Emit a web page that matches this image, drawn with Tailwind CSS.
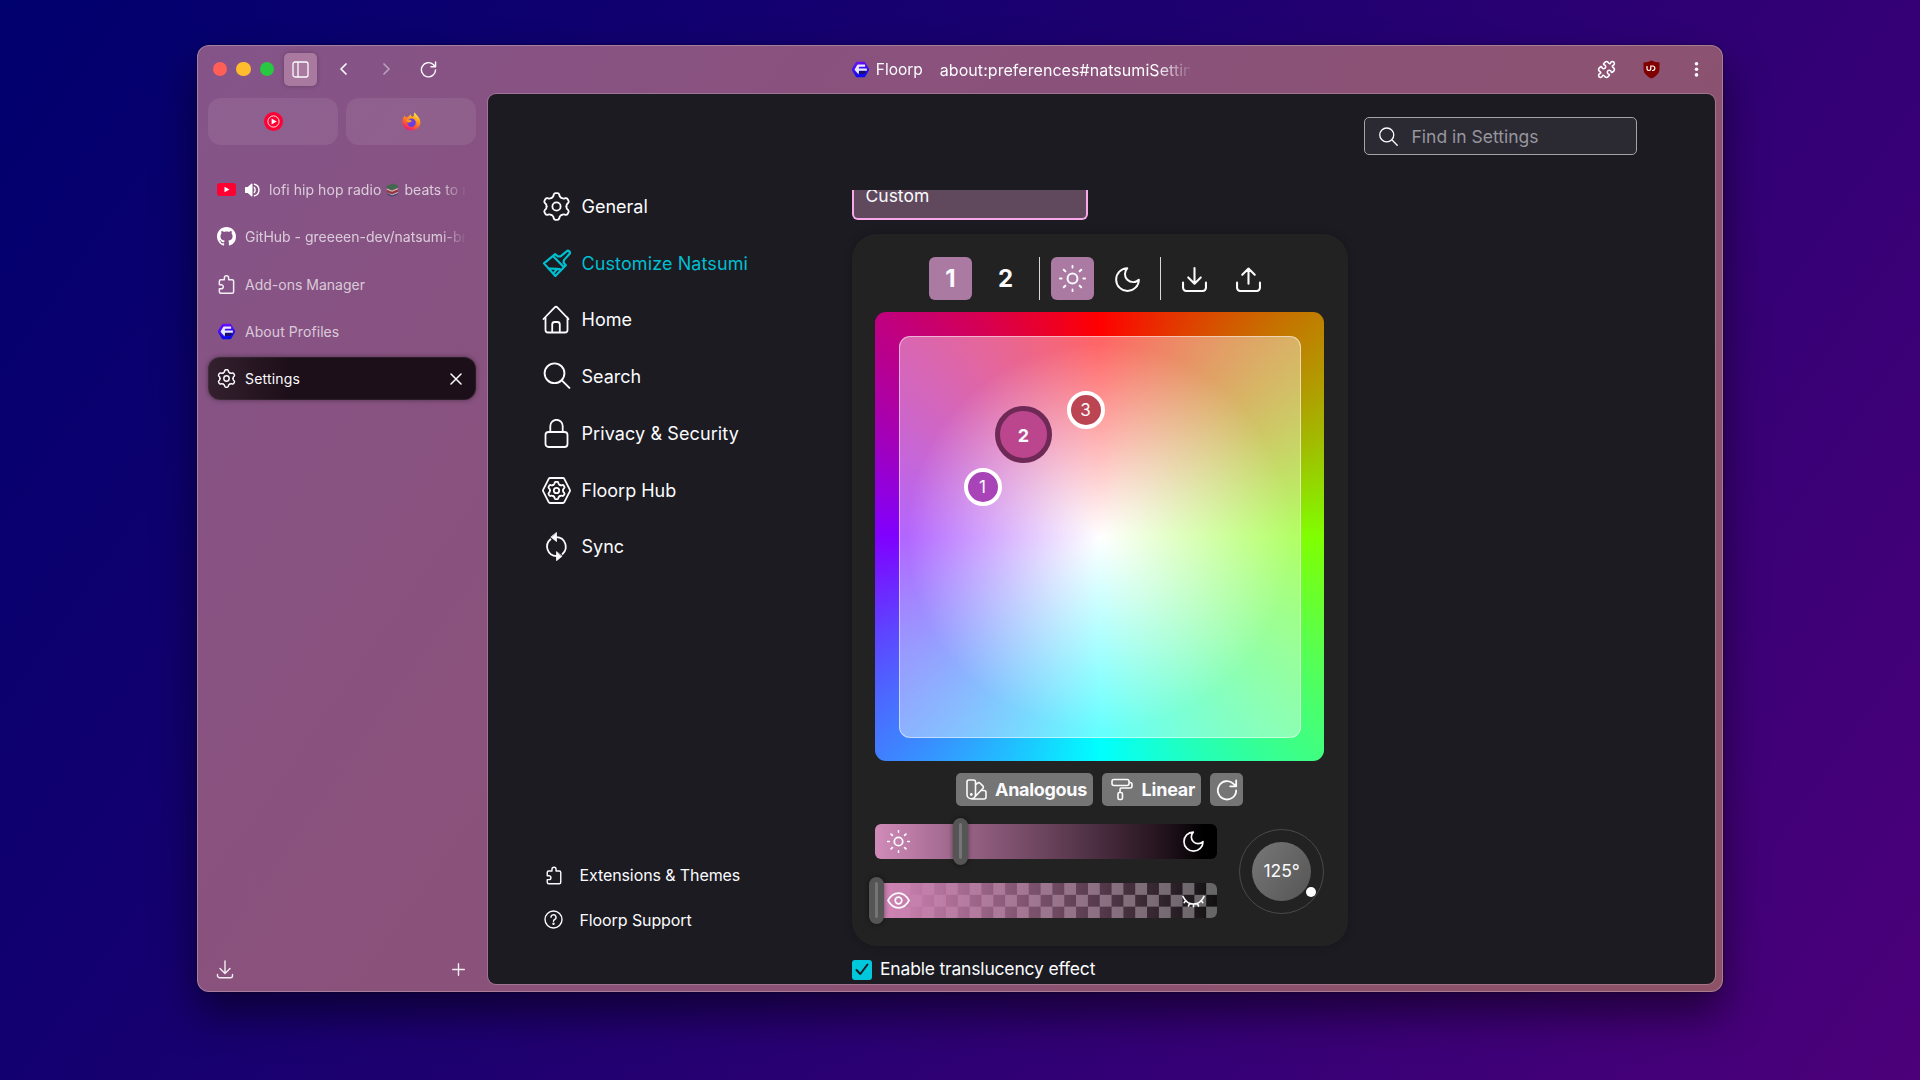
<!DOCTYPE html>
<html lang="en">
<head>
<meta charset="utf-8">
<title>Settings</title>
<script src="https://cdn.jsdelivr.net/npm/@tailwindcss/browser@4"></script>
</head>
<body class="w-[1920px] h-[1080px] overflow-hidden pl-[197px] pt-[45px] bg-[linear-gradient(125deg,#00006e_0%,#1e0070_45%,#4c007a_100%)] font-['Inter','Noto_Sans',sans-serif] text-[#fbfbfe]">
<svg class="absolute size-0">
  <defs>
    <path id="tooth" d="M-4.1-7.1Q-2.8-7.9-2.5-8.8L-2.3-9.8Q-1.9-11-.8-11H.8Q1.9-11 2.3-9.8L2.5-8.8Q2.8-7.9 4.1-7.1"/>
    <symbol id="gear" viewBox="-12 -12 24 24"><g fill="none" stroke="currentColor" stroke-linecap="round"><use href="#tooth"/><use href="#tooth" transform="rotate(60)"/><use href="#tooth" transform="rotate(120)"/><use href="#tooth" transform="rotate(180)"/><use href="#tooth" transform="rotate(240)"/><use href="#tooth" transform="rotate(300)"/><circle r="3.4"/></g></symbol>
    <symbol id="sun" viewBox="-12 -12 24 24"><g fill="none" stroke="currentColor" stroke-width="1.8" stroke-linecap="round"><circle r="4.4"/><path d="M0-11v-2M0 11v2M11 0h2M-11 0h-2" transform="scale(.87)"/><path d="M0-9v-2M0 9v2M9 0h2M-9 0h-2" transform="rotate(45)"/></g></symbol>
    <symbol id="moon" viewBox="0 0 24 24"><path d="M11.8 1.2A10.9 10.9 0 1 0 22.9 12.2A7.6 7.6 0 0 1 11.8 1.2z" fill="none" stroke="currentColor" stroke-width="1.9" stroke-linejoin="round"/></symbol>
    <symbol id="addon" viewBox="0 0 24 24"><path d="M9.3 6V3.8a2.7 2.7 0 0 1 5.4 0V6H19a2 2 0 0 1 2 2v13a2 2 0 0 1-2 2H5a2 2 0 0 1-2-2v-3.5h2.3a2.6 2.6 0 0 0 0-5.2H3V8a2 2 0 0 1 2-2z" fill="none" stroke="currentColor" stroke-width="1.9" stroke-linejoin="round"/></symbol>
    <symbol id="reload" viewBox="0 0 24 24"><path d="M22 12.5A10 10 0 1 1 18.8 5L22 8M22 1.5V8h-6.5" fill="none" stroke="currentColor" stroke-width="2" stroke-linecap="round" stroke-linejoin="round"/></symbol>
    <symbol id="save" viewBox="0 0 24 24"><path d="M12 1v14.5M6 10l6 6 6-6M1 15v5a3 3 0 0 0 3 3h16a3 3 0 0 0 3-3v-5" fill="none" stroke="currentColor" stroke-width="2" stroke-linecap="round" stroke-linejoin="round"/></symbol>
    <symbol id="find" viewBox="0 0 24 24"><path d="M16.5 16.5L23 23M18.6 10A8.8 8.8 0 1 1 1 10a8.8 8.8 0 0 1 17.6 0z" fill="none" stroke="currentColor" stroke-width="1.7" stroke-linecap="round"/></symbol>
    <linearGradient id="fl" x1="0" y1="0" x2=".3" y2="1"><stop offset="0" stop-color="#7a10f5"/><stop offset="1" stop-color="#0a0af0"/></linearGradient>
    <symbol id="floorp" viewBox="0 0 24 24"><path d="M7 1h10a2 2 0 0 1 1.7 1L24 11a2 2 0 0 1 0 2l-5.3 9a2 2 0 0 1-1.7 1H7a2 2 0 0 1-1.7-1L0 13a2 2 0 0 1 0-2l5.3-9A2 2 0 0 1 7 1z" fill="url(#fl)"/><path d="M10 14l11-3-3 7.500H9z" fill="#17106e"/><path d="M9 5h9.500v3H11a1.500 1.500 0 0 0-1.300 1.500V10.500H21v3.200H10L9.300 19 3.500 12.500 6.500 7Q7.500 5 9 5z" fill="#e8e8ff"/></symbol>
  </defs>
</svg>

<div class="flex flex-col w-[1525.500px] h-[947px] rounded-[12px] border border-white/25 bg-[linear-gradient(125deg,#845489_0%,#89527f_25%,#8b5276_55%,#8d5266_100%)] bg-origin-border shadow-[0_22px_40px_rgba(0,0,0,.5),0_0_2px_rgba(0,0,0,.7)]">
  <header class="flex items-center h-[47px] shrink-0 pb-px pl-[14.500px]">
    <div class="flex gap-[9.300px]">
      <i class="size-[14.400px] rounded-full bg-[#ff5f57]"></i><i class="size-[14.400px] rounded-full bg-[#febc2e]"></i><i class="size-[14.400px] rounded-full bg-[#28c840]"></i>
    </div>
    <div class="ml-[10px] flex size-[33px] items-center justify-center rounded-[5px] bg-[#a9799f] shadow-[0_0_4px_rgba(0,0,0,.25)]">
      <svg width="17" height="17" viewBox="0 0 17 17" fill="none" stroke="currentColor" stroke-width="1.300"><rect x="1" y="1" width="15" height="15" rx="2"/><path d="M6 1v15"/></svg>
    </div>
    <svg class="ml-[16.500px]" width="20" height="20" viewBox="0 0 20 20" fill="none" stroke="currentColor" stroke-width="1.700" stroke-linecap="round" stroke-linejoin="round"><path d="M12 5l-5 5 5 5"/></svg>
    <svg class="ml-[22px] opacity-45" width="20" height="20" viewBox="0 0 20 20" fill="none" stroke="currentColor" stroke-width="1.700" stroke-linecap="round" stroke-linejoin="round"><path d="M8 5l5 5-5 5"/></svg>
    <svg class="ml-[24px]" width="17" height="17"><use href="#reload"/></svg>
    <div class="ml-[415.500px] flex w-[338px] items-center overflow-hidden whitespace-nowrap pt-px text-[15.500px] [mask-image:linear-gradient(90deg,#000_305px,transparent_342px)]">
      <svg class="-mt-px shrink-0 overflow-visible" width="17" height="17"><use href="#floorp"/></svg>
      <span class="ml-[6.500px]">Floorp</span>
      <span class="ml-[17px] text-[16px] tracking-[.05px]">about:preferences#natsumiSettin</span>
    </div>
    <div class="ml-auto mr-[22.500px] flex items-center">
      <svg width="19" height="19" viewBox="0 0 24 24" fill="none" stroke="currentColor" stroke-width="2"><path d="M15.390 4.390a1 1 0 0 0 1.680-.474 2.500 2.500 0 1 1 3.014 3.015 1 1 0 0 0-.474 1.680l1.683 1.682a2.414 2.414 0 0 1 0 3.414L19.610 15.390a1 1 0 0 1-1.680-.474 2.500 2.500 0 1 0-3.014 3.015 1 1 0 0 1 .474 1.680l-1.683 1.682a2.414 2.414 0 0 1-3.414 0L8.610 19.610a1 1 0 0 0-1.680.474 2.500 2.500 0 1 1-3.014-3.015 1 1 0 0 0 .474-1.680l-1.683-1.682a2.414 2.414 0 0 1 0-3.414L4.390 8.610a1 1 0 0 1 1.680.474 2.500 2.500 0 1 0 3.014-3.015 1 1 0 0 1-.474-1.680l1.683-1.682a2.414 2.414 0 0 1 3.414 0z"/></svg>
      <svg class="ml-[27px]" width="17" height="19" viewBox="0 0 17 19"><path d="M8.500.5Q12 2.500 16.500 2.500V9Q16.500 15 8.500 18.500Q.5 15 .5 9V2.500Q5 2.500 8.500.5z" fill="#800000"/><path d="M4 6v2.600a1.900 1.900 0 0 0 3.800 0V6h2.300a2.300 2.300 0 0 1 0 4.500H9" fill="none" stroke="#fff" stroke-width="1.200"/></svg>
      <svg class="ml-[34px]" width="5" height="17" viewBox="0 0 5 17" fill="currentColor"><circle cx="2.500" cy="2.700" r="1.800"/><circle cx="2.500" cy="8.300" r="1.800"/><circle cx="2.500" cy="13.900" r="1.800"/></svg>
    </div>
  </header>

  <div class="flex min-h-0 flex-1">
    <aside class="flex w-[289px] shrink-0 flex-col pl-[10px] pr-[11px] pt-[5px] pb-[12px] text-[14px]">
      <div class="flex gap-[8px]">
        <div class="flex h-[47px] flex-1 items-center justify-center rounded-[13px] bg-white/8">
          <svg width="19" height="19" viewBox="0 0 19 19"><circle cx="9.500" cy="9.500" r="9.500" fill="#ff0033"/><circle cx="9.500" cy="9.500" r="5.600" fill="none" stroke="#fff" stroke-width=".9"/><path d="M7.600 6.500l5 3-5 3z" fill="#fff"/></svg>
        </div>
        <div class="flex h-[47px] flex-1 items-center justify-center rounded-[13px] bg-white/8">
          <svg width="19" height="20" viewBox="0 0 19 20"><defs><linearGradient id="fx" x1=".8" y1="0" x2=".3" y2="1"><stop offset="0" stop-color="#fff44f"/><stop offset=".35" stop-color="#ffa21c"/><stop offset=".7" stop-color="#ff5436"/><stop offset="1" stop-color="#e9157a"/></linearGradient></defs><path d="M2.500 3.500L4 5.500Q5 4.800 6.500 4.800Q7.500 3 9 2.500Q8.500 4 10.500 5L12 3.500Q11.500 1.500 12.800.3Q13.500 2.500 16 4.500Q18.600 7 18.500 11A9.200 8.900 0 0 1 .3 11Q0 6.500 2.500 3.500z" fill="url(#fx)"/><circle cx="9.600" cy="10.800" r="4.200" fill="#6a3fe0"/><path d="M4 8.500Q6 6.700 8.500 8Q10.500 9 9.500 9.800Q8 9.500 7 10.800Q5 10.500 4 8.500z" fill="#ff9a1f"/></svg>
        </div>
      </div>
      <div class="mt-[23px] flex flex-col gap-[4.250px]">
        <div class="flex h-[43px] items-center pl-[9px] text-white/70">
          <svg class="shrink-0" width="19" height="13" viewBox="0 0 19 13"><rect width="19" height="13" rx="3" fill="#ff0033"/><path d="M7.500 3.700l5 2.800-5 2.800z" fill="#fff"/></svg>
          <svg class="ml-[9px] shrink-0" width="15" height="14" viewBox="0 0 15 14" fill="none" stroke="#fff" stroke-width="1.400" stroke-linecap="round"><path d="M.7 4.800h2.200L6.800 1.300v11.400L2.900 9.200H.7z" fill="#fff" stroke-linejoin="round"/><path d="M9.300 4.500q1.600 2.500 0 5M9.500 1.200a6 6 0 0 1 0 11.600"/></svg>
          <div class="ml-[9px] flex w-[196px] items-center overflow-hidden whitespace-nowrap tracking-[.07px] [mask-image:linear-gradient(90deg,#000_172px,transparent_198px)]">
            <span>lofi hip hop radio</span>
            <svg class="mx-[5px] shrink-0 opacity-90" width="13" height="14" viewBox="0 0 13 14"><path d="M.5 3l6.500-2.500L12 2.500v2L6 7 .5 5z" fill="#3d6b48"/><path d="M.8 5.500l5.200 2 6-2.500v1.500L6 9 .8 7z" fill="#d6b8a8"/><path d="M.8 7l5.200 2 6-2.500v2L6 11 .8 9z" fill="#9c3030"/><path d="M1.500 9.700L6 11.500l6-2.500v1.200L6 12.500z" fill="#d0c0c0"/><path d="M1.500 10.500l4.500 2 6-2.300v1.300L6 13.800l-4.500-2z" fill="#34466f"/></svg>
            <span>beats to</span><span class="ml-[4px]">relax</span>
          </div>
        </div>
        <div class="flex h-[43px] items-center pl-[9px] text-white/70">
          <svg class="shrink-0" width="19" height="19" viewBox="0 0 16 16" fill="#fff"><path d="M8 0C3.580 0 0 3.580 0 8c0 3.540 2.290 6.530 5.470 7.590.4.070.55-.17.55-.38 0-.19-.01-.82-.01-1.490-2.010.37-2.530-.49-2.690-.94-.09-.23-.48-.94-.82-1.130-.28-.15-.68-.52-.01-.53.63-.01 1.080.58 1.230.82.720 1.210 1.870.87 2.330.66.070-.52.280-.87.510-1.070-1.780-.2-3.640-.89-3.640-3.950 0-.87.31-1.590.82-2.150-.08-.2-.36-1.020.08-2.120 0 0 .67-.21 2.200.82.640-.18 1.320-.27 2-.27s1.360.09 2 .27c1.530-1.040 2.200-.82 2.200-.82.440 1.100.16 1.920.08 2.120.51.56.82 1.270.82 2.150 0 3.070-1.870 3.750-3.650 3.950.29.25.54.73.54 1.480 0 1.070-.01 1.930-.01 2.200 0 .21.150.46.550.38A8.010 8.010 0 0 0 16 8c0-4.420-3.580-8-8-8"/></svg>
          <div class="ml-[9px] w-[220px] overflow-hidden whitespace-nowrap [mask-image:linear-gradient(90deg,#000_196px,transparent_222px)]"><span>GitHub - greeeen-dev/natsumi-br</span></div>
        </div>
        <div class="flex h-[43px] items-center pl-[9px] text-white/70">
          <svg class="text-white/90" width="19" height="19"><use href="#addon"/></svg>
          <span class="ml-[9px]">Add-ons Manager</span>
        </div>
        <div class="flex h-[43px] items-center pl-[10px] text-white/70">
          <svg class="overflow-visible" width="17" height="17"><use href="#floorp"/></svg>
          <span class="ml-[10px] tracking-[.07px]">About Profiles</span>
        </div>
        <div class="flex h-[43px] items-center rounded-[12px] bg-[linear-gradient(90deg,#34202f_0px,#1d0f19_80px)] pl-[9px] pr-[14px] shadow-[0_0_5px_rgba(0,0,0,.4),inset_0_0_0_1px_rgba(255,255,255,.06)]">
          <svg width="19" height="19" stroke-width="1.800"><use href="#gear"/></svg>
          <span class="ml-[9px] mr-auto tracking-[.2px]">Settings</span>
          <svg width="12" height="12" viewBox="0 0 12 12" stroke="currentColor" stroke-width="1.500" stroke-linecap="round"><path d="M1 1l10 10M11 1L1 11"/></svg>
        </div>
      </div>
      <div class="mt-auto flex items-center justify-between pl-[8px] pr-[11px] text-white/90">
        <svg width="18" height="19" viewBox="0 0 18 19" fill="none" stroke="currentColor" stroke-width="1.400" stroke-linecap="round" stroke-linejoin="round"><path d="M9 1v12M4 8.500l5 5 5-5M1.500 14.500v1.200a2 2 0 0 0 2 2h11a2 2 0 0 0 2-2v-1.200"/></svg>
        <svg width="13" height="13" viewBox="0 0 13 13" stroke="currentColor" stroke-width="1.400" stroke-linecap="round"><path d="M6.500.7v11.600M.7 6.500h11.600"/></svg>
      </div>
    </aside>

    <main class="mr-[6px] mb-[6px] flex flex-1 overflow-hidden rounded-[9px] border border-white/20 bg-[#1c1b22] bg-clip-padding">
      <nav class="flex w-[363.500px] shrink-0 flex-col pl-[53.500px] pt-[84px] pb-[42px] text-[18px]">
        <div class="flex h-[56.750px] items-center gap-[11px]"><svg width="29" height="29" stroke-width="1.500"><use href="#gear"/></svg><span>General</span></div>
        <div class="flex h-[56.750px] items-center gap-[11px] text-[#00bfd0]"><svg width="29" height="29" viewBox="-.5 0 25 25" fill="none" stroke="currentColor" stroke-width="1.900" stroke-linecap="round" stroke-linejoin="round"><path d="M15.500 6.300L20.700 2a1.700 1.700 0 0 1 2.400 2.400L18.400 9.600M9 6l1.800-1.500 2.400 1.900 2.300-.1M18.400 9.600l-.300 2.200 1.900 2.200-1.600 1.800L9 6 1.200 12.400 11 23.300l7.400-7.500M5 16.700l9.800.700M12.500 17.200l-3 3.600"/></svg><span class="tracking-[.1px]">Customize Natsumi</span></div>
        <div class="flex h-[56.750px] items-center gap-[11px]"><svg width="29" height="29" viewBox="0 0 29 29" fill="none" stroke="currentColor" stroke-width="1.800" stroke-linecap="round" stroke-linejoin="round"><path d="M1.500 14L12.700 2.300a1.800 1.800 0 0 1 2.600 0L26.500 14M3.500 12.500V25a2.500 2.500 0 0 0 2.500 2.500h17a2.500 2.500 0 0 0 2.500-2.500V12.500M10.200 27V19.500a2.500 2.500 0 0 1 2.500-2.500h2.600a2.500 2.500 0 0 1 2.500 2.500V27"/></svg><span>Home</span></div>
        <div class="flex h-[56.750px] items-center gap-[11px]"><svg class="pl-[1px] pb-[2px]" width="29" height="29"><use href="#find"/></svg><span>Search</span></div>
        <div class="flex h-[56.750px] items-center gap-[11px]"><svg width="29" height="29" viewBox="0 0 29 29" fill="none" stroke="currentColor" stroke-width="1.800"><rect x="3.500" y="13" width="22" height="15" rx="3"/><path d="M8.300 13V7a6.200 6.200 0 0 1 12.400 0v6"/></svg><span class="tracking-[.1px]">Privacy &amp; Security</span></div>
        <div class="flex h-[56.750px] items-center gap-[11px]"><svg width="29" height="29" viewBox="-14.500 -14.500 29 29" fill="none" stroke="currentColor" stroke-width="1.800" stroke-linejoin="round"><path d="M-6.500-12.500h13a1.500 1.500 0 0 1 1.200.7L13.300-.8a1.500 1.500 0 0 1 0 1.600L7.700 11.800a1.500 1.500 0 0 1-1.200.7h-13a1.500 1.500 0 0 1-1.200-.7L-13.300.8a1.500 1.500 0 0 1 0-1.600L-7.700-11.800a1.500 1.500 0 0 1 1.200-.7z"/><svg x="-9.500" y="-9.500" width="19" height="19" stroke-width="2.300"><use href="#gear"/></svg></svg><span>Floorp Hub</span></div>
        <div class="flex h-[56.750px] items-center gap-[11px]"><svg width="29" height="29" viewBox="0 0 29 29" fill="none" stroke="currentColor" stroke-width="1.800" stroke-linecap="round"><path d="M14.500 5.200A9.600 9.600 0 0 1 20.500 22M14.500 24.200A9.600 9.600 0 0 1 8.500 7.300"/><path d="M14.500.8v8.700L9.200 5.200zM14.500 20v8.700l5.300-4.300z" fill="currentColor" stroke-width=".8"/></svg><span>Sync</span></div>
        <div class="mt-auto flex h-[44.500px] items-center gap-[17px] pl-[3px] text-[16px] tracking-[-.1px]"><svg width="18" height="19"><use href="#addon"/></svg><span>Extensions &amp; Themes</span></div>
        <div class="flex h-[44.500px] items-center gap-[17px] pl-[2px] text-[16px] tracking-[-.1px]"><svg width="19" height="19" viewBox="0 0 19 19" fill="none" stroke="currentColor" stroke-width="1.400" stroke-linecap="round"><circle cx="9.500" cy="9.500" r="8.500"/><path d="M7 7.300a2.500 2.500 0 1 1 3.700 2.200q-1.200.6-1.200 1.800"/><circle cx="9.500" cy="13.700" r=".5" fill="currentColor"/></svg><span>Floorp Support</span></div>
      </nav>

      <div class="flex flex-1 flex-col">
        <div class="mt-[23px] ml-[512px] flex h-[38px] w-[273px] shrink-0 items-center rounded-[5px] border border-[#a3a3a8] bg-[#2b2a33] pl-[14px] text-[17.500px]">
          <svg width="19" height="19"><use href="#find"/></svg>
          <span class="ml-[14px] pt-[2px] text-[#97969d]">Find in Settings</span>
        </div>
        <div class="mt-[35px] flex min-h-0 flex-1 flex-col overflow-hidden px-[10px] -ml-[10px]">
          <div class="flex h-[30px] w-[236px] shrink-0 rounded-b-[6px] border-2 border-t-0 border-[#f9a8ec] bg-[#60495d] pl-[12px] text-[17.500px] leading-[11px]"><span>Custom</span></div>
          <div class="mt-[14px] flex h-[712px] w-[496px] shrink-0 flex-col items-center rounded-[25px] bg-[#222222] pt-[23px] shadow-[0_0_10px_rgba(0,0,0,.2)]">
            <div class="flex h-[43px] items-center text-[24px] font-bold">
              <div class="flex size-[43px] items-center justify-center rounded-[6px] bg-[#ab7aa3] pt-px">1</div>
              <div class="ml-[12px] flex size-[43px] items-center justify-center pt-px">2</div>
              <div class="mx-[11.500px] h-[43px] w-px bg-[#d8d8d8]"></div>
              <div class="flex size-[43px] items-center justify-center rounded-[6px] bg-[#ab7aa3]"><svg width="27" height="27"><use href="#sun"/></svg></div>
              <div class="ml-[11.500px] flex size-[43px] items-center justify-center pt-px"><svg width="25" height="25"><use href="#moon"/></svg></div>
              <div class="mx-[11.500px] h-[43px] w-px bg-[#d8d8d8]"></div>
              <div class="flex size-[43px] items-center justify-center pt-px"><svg width="25" height="25"><use href="#save"/></svg></div>
              <div class="ml-[11.500px] flex size-[43px] items-center justify-center pt-px"><svg width="25" height="25" viewBox="0 0 24 24" fill="none" stroke="currentColor" stroke-width="2" stroke-linecap="round" stroke-linejoin="round"><path d="M12 16V1.500M6 7.500l6-6 6 6M1 15v5a3 3 0 0 0 3 3h16a3 3 0 0 0 3-3v-5"/></svg></div>
            </div>
            <div class="relative mt-[12px] size-[449px] shrink-0 rounded-[11px] bg-[conic-gradient(#ff0000,#80ff00,#00ffff,#8000ff,#ff0000)] p-[23.500px]">
              <div class="size-[402px] rounded-[11px] border border-white/50 bg-[radial-gradient(circle,#fff_0%,rgba(255,255,255,.4)_68%)] bg-origin-border"></div>
              <div class="absolute left-[88.500px] top-[156px] flex size-[38px] items-center justify-center rounded-full border-[4.500px] border-white bg-[#a944b8] pt-[2px] text-[17px]">1</div>
              <div class="absolute left-[120px] top-[94px] flex size-[57px] items-center justify-center rounded-full border-[5px] border-[#6e2956] bg-[#bb468d] pt-px text-[18px] font-bold">2</div>
              <div class="absolute left-[191.500px] top-[79px] flex size-[38px] items-center justify-center rounded-full border-[4.500px] border-white bg-[#bb4552] pt-[2px] text-[17px]">3</div>
            </div>
            <div class="mt-[12px] flex h-[33px] shrink-0 gap-[9px] text-[18px] font-bold">
              <div class="flex w-[137px] items-center rounded-[5px] bg-[#757575] pl-[10px]"><svg width="21" height="21" viewBox="0 0 21 21" fill="none" stroke="currentColor" stroke-width="1.600" stroke-linejoin="round"><path d="M3 1h4.500a2 2 0 0 1 2 2v12.500a4.200 4.200 0 0 1-8.500 0V3a2 2 0 0 1 2-2zM9.500 6l2-1.800a1.800 1.800 0 0 1 2.600 0l2.700 2.700a1.800 1.800 0 0 1 0 2.600L8.300 18.500M14.800 11.500H18a2 2 0 0 1 2 2V18a2 2 0 0 1-2 2H5.500"/><circle cx="5.300" cy="15.500" r=".6" fill="currentColor"/></svg><span class="ml-[8px] tracking-[-.3px]">Analogous</span></div>
              <div class="flex w-[99px] items-center rounded-[5px] bg-[#757575] pl-[9px]"><svg width="22" height="23" viewBox="0 0 22 23" fill="none" stroke="currentColor" stroke-width="1.600" stroke-linejoin="round"><rect x="1" y="1.500" width="17" height="6" rx="2"/><path d="M18 4.500h1a2 2 0 0 1 2 2V8a2 2 0 0 1-2 2h-8.500a1.500 1.500 0 0 0-1.500 1.500V14"/><rect x="7" y="14.500" width="4.500" height="7" rx="1.500"/></svg><span class="ml-[8.500px] tracking-[-.2px]">Linear</span></div>
              <div class="flex w-[33px] items-center justify-center rounded-[5px] bg-[#757575]"><svg width="22" height="22"><use href="#reload"/></svg></div>
            </div>
            <div class="mt-[17.500px] flex w-[449px] shrink-0">
              <div class="flex w-[343px] flex-col gap-[23.500px]">
                <div class="relative flex h-[35.500px] items-center justify-between rounded-[6px] bg-[linear-gradient(90deg,#d18bb9_0%,#a56c92_20%,#6a435c_50%,#1f1019_86%,#000_96%)] px-[12px]">
                  <svg width="23" height="23"><use href="#sun"/></svg><svg class="mr-[1px]" width="21" height="21"><use href="#moon"/></svg>
                  <div class="absolute -top-[6px] left-[78px] flex h-[47px] w-[14.500px] items-center justify-center rounded-full bg-[#555] shadow-[0_0_5px_rgba(0,0,0,.5)]"><i class="h-[36px] w-[3px] rounded-full bg-[#757575]"></i></div>
                </div>
                <div class="relative flex h-[35.500px] items-center justify-between rounded-[6px] bg-[linear-gradient(90deg,#cd82b2_5%,rgba(205,130,178,0)_100%),repeating-conic-gradient(#111_0_25%,#666_0_50%)] bg-[size:auto,23.660px_23.660px] px-[12px]">
                  <svg width="23" height="17" viewBox="0 0 23 17" fill="none" stroke="currentColor" stroke-width="1.700"><path d="M1 8.500Q5 1.200 11.500 1.200T22 8.500Q18 15.800 11.500 15.800T1 8.500z"/><circle cx="11.500" cy="8.500" r="3.300"/></svg>
                  <svg width="23" height="17" viewBox="0 0 23 17" fill="none" stroke="currentColor" stroke-width="1.700" stroke-linecap="round"><path d="M1 4.500Q4.500 12 11.500 12T22 4.500M3.500 9L2.300 10.500M7.500 11.500L6.500 14M11.500 12v2.500M15.500 11.500l1 2.500M19.500 9l1.200 1.500"/></svg>
                  <div class="absolute -top-[6px] -left-[6px] flex h-[47px] w-[14.500px] items-center justify-center rounded-full bg-[#555] shadow-[0_0_5px_rgba(0,0,0,.5)]"><i class="h-[36px] w-[3px] rounded-full bg-[#757575]"></i></div>
                </div>
              </div>
              <div class="relative ml-[22.500px] mt-[5px] flex size-[85px] items-center justify-center rounded-full border border-[#4a4a4a]">
                <div class="flex size-[59px] items-center justify-center rounded-full bg-[linear-gradient(125deg,#777,#555)] pt-px text-[17.500px]"><span>125°</span></div>
                <i class="absolute left-[65.500px] top-[57px] size-[10px] rounded-full bg-white"></i>
              </div>
            </div>
          </div>
          <div class="mt-[13.500px] flex h-[20px] shrink-0 items-center text-[17.500px]">
            <div class="flex size-[20px] items-center justify-center rounded-[3px] bg-[#00c8dc]"><svg width="14" height="13" viewBox="0 0 14 13" fill="none" stroke="#1c1b22" stroke-width="2" stroke-linecap="round" stroke-linejoin="round"><path d="M1.500 7l3.800 4L12.500 1.500"/></svg></div>
            <span class="ml-[8.500px] tracking-[-.18px]">Enable translucency effect</span>
          </div>
        </div>
      </div>
    </main>
  </div>
</div>
</body>
</html>
